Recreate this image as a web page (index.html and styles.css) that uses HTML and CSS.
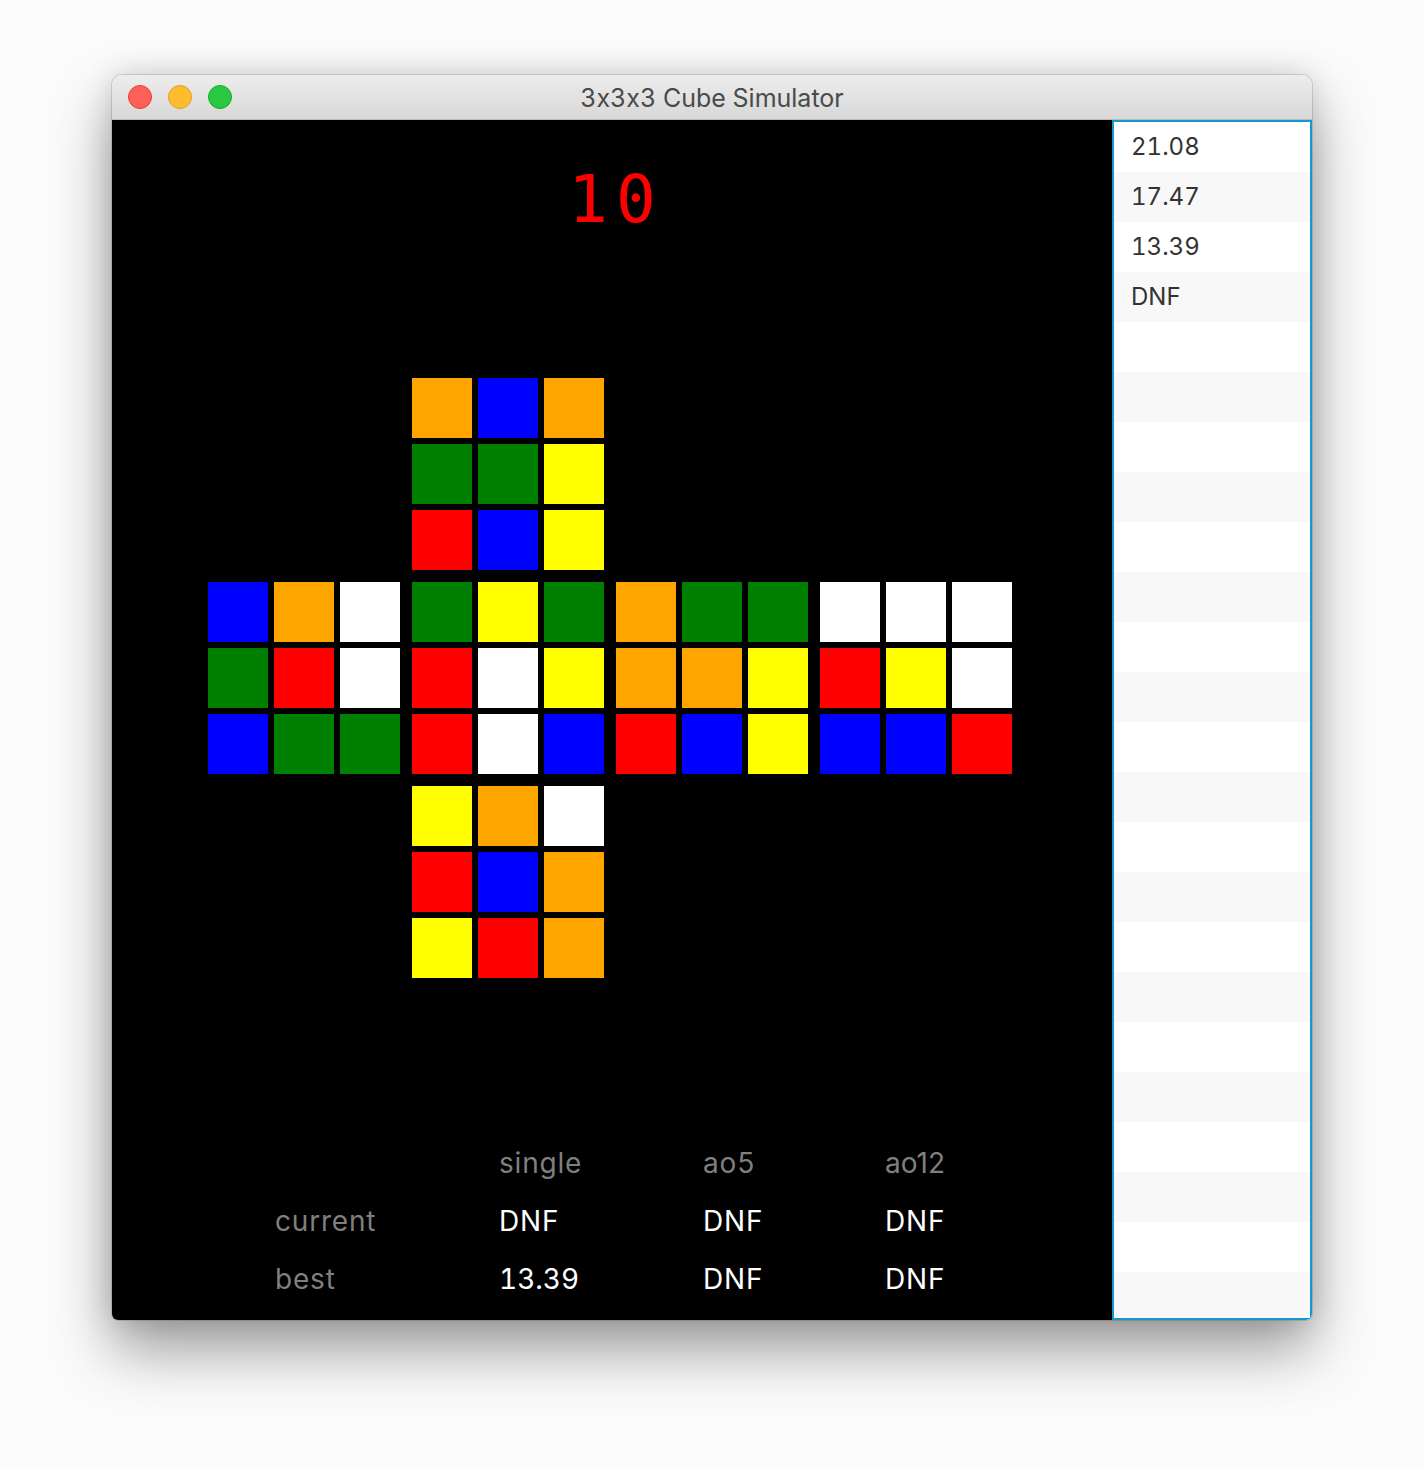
FILE: index.html
```html
<!DOCTYPE html>
<html>
<head>
<meta charset="utf-8">
<title>3x3x3 Cube Simulator</title>
<link rel="stylesheet" href="styles.css">
</head>
<body>
<div class="window">
  <div class="titlebar">
    <div class="lights">
      <span class="light red"></span>
      <span class="light yellow"></span>
      <span class="light green"></span>
    </div>
    <div class="title">3x3x3 Cube Simulator</div>
  </div>
  <div class="body">
    <div class="stage">
      <div class="timer">10</div>
      <div class="net">
        <div class="face f-up">
          <i class="o"></i><i class="b"></i><i class="o"></i>
          <i class="g"></i><i class="g"></i><i class="y"></i>
          <i class="r"></i><i class="b"></i><i class="y"></i>
        </div>
        <div class="face f-left">
          <i class="b"></i><i class="o"></i><i class="w"></i>
          <i class="g"></i><i class="r"></i><i class="w"></i>
          <i class="b"></i><i class="g"></i><i class="g"></i>
        </div>
        <div class="face f-front">
          <i class="g"></i><i class="y"></i><i class="g"></i>
          <i class="r"></i><i class="w"></i><i class="y"></i>
          <i class="r"></i><i class="w"></i><i class="b"></i>
        </div>
        <div class="face f-right">
          <i class="o"></i><i class="g"></i><i class="g"></i>
          <i class="o"></i><i class="o"></i><i class="y"></i>
          <i class="r"></i><i class="b"></i><i class="y"></i>
        </div>
        <div class="face f-back">
          <i class="w"></i><i class="w"></i><i class="w"></i>
          <i class="r"></i><i class="y"></i><i class="w"></i>
          <i class="b"></i><i class="b"></i><i class="r"></i>
        </div>
        <div class="face f-down">
          <i class="y"></i><i class="o"></i><i class="w"></i>
          <i class="r"></i><i class="b"></i><i class="o"></i>
          <i class="y"></i><i class="r"></i><i class="o"></i>
        </div>
      </div>
      <div class="stats">
        <span></span><span class="head">single</span><span class="head">ao5</span><span class="head ao12">ao12</span>
        <span class="label">current</span><span class="val">DNF</span><span class="val">DNF</span><span class="val">DNF</span>
        <span class="label">best</span><span class="val num">13.39</span><span class="val">DNF</span><span class="val">DNF</span>
      </div>
    </div>
    <div class="times">
      <div class="row">21.08</div>
      <div class="row">17.47</div>
      <div class="row">13.39</div>
      <div class="row">DNF</div>
      <div class="row"></div><div class="row"></div><div class="row"></div><div class="row"></div>
      <div class="row"></div><div class="row"></div><div class="row"></div><div class="row"></div>
      <div class="row"></div><div class="row"></div><div class="row"></div><div class="row"></div>
      <div class="row"></div><div class="row"></div><div class="row"></div><div class="row"></div>
      <div class="row"></div><div class="row"></div><div class="row"></div><div class="row"></div>
    </div>
  </div>
</div>
</body>
</html>
```
FILE: styles.css
```css
* { box-sizing: border-box; }
html, body { margin: 0; padding: 0; }
body {
  background: #fbfbfb;
  width: 1424px;
  height: 1468px;
  overflow: hidden;
  padding-top: 75px;
  padding-left: 112px;
  font-family: Inter, "Liberation Sans", sans-serif;
  font-feature-settings: "calt" 0;
  font-variant-numeric: tabular-nums;
}
.window {
  width: 1200px;
  height: 1245px;
  border-radius: 10px 10px 6px 6px;
  overflow: hidden;
  box-shadow: 0 0 0 1px rgba(0,0,0,0.12), 0 30px 60px rgba(0,0,0,0.38), 0 0 30px rgba(0,0,0,0.14);
  display: flex;
  flex-direction: column;
}
.titlebar {
  height: 45px;
  flex: none;
  background: linear-gradient(#ededed, #d8d8d8);
  border-bottom: 1px solid #bdbdbd;
  display: flex;
  align-items: center;
  position: relative;
}
.lights {
  display: flex;
  gap: 16px;
  padding-left: 16px;
  position: absolute;
  left: 0;
  top: 10px;
}
.light {
  width: 24px;
  height: 24px;
  border-radius: 50%;
  display: block;
}
.light.red { background: #fe5f57; border: 1px solid #e0443e; }
.light.yellow { background: #febc2e; border: 1px solid #dea123; }
.light.green { background: #28c840; border: 1px solid #1aab29; }
.title {
  flex: 1;
  text-align: center;
  font-size: 25px;
  color: #4a4a4a;
  padding-top: 2px;
}
.body {
  flex: 1;
  display: flex;
  min-height: 0;
}
.stage {
  width: 1000px;
  background: #000;
  display: flex;
  flex-direction: column;
}
.timer {
  margin-top: 47px;
  height: 66px;
  line-height: 66px;
  font-family: "DejaVu Sans Mono", monospace;
  font-size: 66px;
  letter-spacing: 8px;
  padding-left: 8px;
  color: #ff0000;
  text-align: center;
}
.net {
  margin-top: 145px;
  margin-left: 96px;
  display: grid;
  grid-template-columns: repeat(4, 192px);
  grid-template-rows: repeat(3, 192px);
  gap: 12px;
}
.face {
  display: grid;
  grid-template-columns: repeat(3, 60px);
  grid-template-rows: repeat(3, 60px);
  gap: 6px;
}
.f-up { grid-column: 2; grid-row: 1; }
.f-left { grid-column: 1; grid-row: 2; }
.f-front { grid-column: 2; grid-row: 2; }
.f-right { grid-column: 3; grid-row: 2; }
.f-back { grid-column: 4; grid-row: 2; }
.f-down { grid-column: 2; grid-row: 3; }
.face i { display: block; }
.o { background: #ffa500; }
.b { background: #0000ff; }
.g { background: #008000; }
.y { background: #ffff00; }
.r { background: #ff0000; }
.w { background: #ffffff; }
.stats {
  margin-top: 156px;
  margin-left: 163px;
  display: grid;
  grid-template-columns: 224px 204px 182px 1fr;
  grid-auto-rows: 58px;
  line-height: 58px;
  font-size: 28px;
  letter-spacing: 0.8px;
}
.head, .label { color: #7f7f7f; }
.val { color: #ffffff; }
.num { letter-spacing: 0; }
.ao12 { letter-spacing: 0; font-variant-numeric: normal; }
.times {
  width: 200px;
  background: #fff;
  border: 2px solid #1497d3;
  overflow: hidden;
}
.row {
  height: 50px;
  line-height: 50px;
  padding-left: 17px;
  font-size: 24px;
  color: #333333;
  background: #ffffff;
}
.row:nth-child(even) { background: #f8f8f8; }
```
